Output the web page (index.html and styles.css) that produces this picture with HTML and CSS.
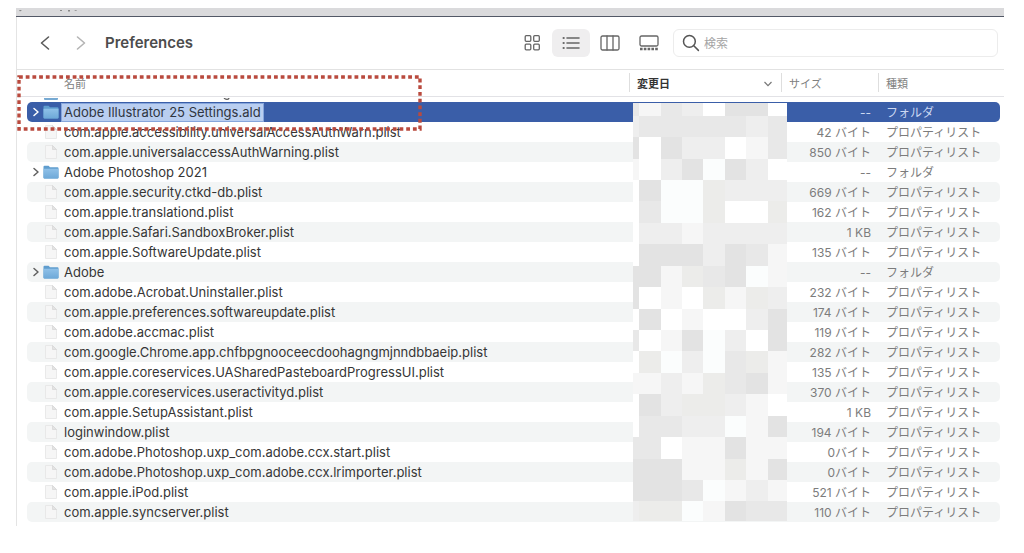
FILE: index.html
```html
<!DOCTYPE html>
<html lang="ja">
<head>
<meta charset="utf-8">
<title>Preferences</title>
<link rel="stylesheet" href="styles.css">
</head>
<body>
<svg class="defs" aria-hidden="true">
  <defs>
    <linearGradient id="folder-face" x1="0" y1="0" x2="0" y2="1"><stop offset="0" stop-color="#8fc1e8"/><stop offset="1" stop-color="#6ea9d8"/></linearGradient>
    <symbol id="folder" viewBox="0 0 16 14"><path d="M.5 1.8Q.5 .8 1.5 .8H5.6L7 2.2H14.5Q15.5 2.2 15.5 3.2V12.4Q15.5 13.4 14.5 13.4H1.5Q.5 13.4 .5 12.4Z" fill="#5f9dce"/><path d="M.5 3.8H15.5V12.4Q15.5 13.4 14.5 13.4H1.5Q.5 13.4 .5 12.4Z" fill="url(#folder-face)"/></symbol>
    <symbol id="doc" viewBox="0 0 16 16"><path d="M2.5 1.5H9.5L13.5 5.5V14.5H2.5Z" fill="#f6f6f6" stroke="#e4e4e4" stroke-width=".8"/><path d="M9.5 1.5V5.5H13.5Z" fill="#e4e4e4" stroke="#d4d4d4" stroke-width=".7"/></symbol>
    <symbol id="arrow" viewBox="0 0 8 10"><path d="M2 1.5L6 5L2 8.5" fill="none" stroke="currentColor" stroke-width="1.5" stroke-linecap="round" stroke-linejoin="round"/></symbol>
  </defs>
</svg>
<main class="window">
  <div class="backdrop"><svg width="70" height="3" viewBox="0 0 70 3" aria-hidden="true"><path d="M3 0H6L4 1.5Z M44 0H46V1H44Z M52 0H54V1.5H52Z M58 0L61 0L60 1Z" fill="#888"/></svg></div>
  <header class="toolbar">
    <nav class="history">
      <button class="nav" aria-label="戻る"><svg width="10" height="16" viewBox="0 0 10 16"><path d="M8.5 2L1.5 8L8.5 14"/></svg></button>
      <button class="nav nav-off" aria-label="進む"><svg width="10" height="16" viewBox="0 0 10 16"><path d="M1.5 2L8.5 8L1.5 14"/></svg></button>
    </nav>
    <h1 class="title">Preferences</h1>
    <div class="views">
      <button class="view" aria-label="アイコン"><svg width="18" height="18" viewBox="0 0 18 18"><rect x="2.2" y="1.7" width="5.6" height="5.6" rx="1"/><rect x="10.7" y="1.7" width="5.6" height="5.6" rx="1"/><rect x="2.2" y="10.2" width="5.6" height="5.6" rx="1"/><rect x="10.7" y="10.2" width="5.6" height="5.6" rx="1"/></svg></button>
      <button class="view view-on" aria-label="リスト"><svg width="18" height="16" viewBox="0 0 18 16"><path d="M5 3H17M5 8H17M5 13H17" stroke-width="1.6"/><path d="M1.6 3H1.7M1.6 8H1.7M1.6 13H1.7" stroke-width="2.2"/></svg></button>
      <button class="view" aria-label="カラム"><svg width="20" height="16" viewBox="0 0 20 16"><rect x="1" y="1" width="18" height="14" rx="1.5"/><path d="M7 1V15M13 1V15"/></svg></button>
      <button class="view" aria-label="ギャラリー"><svg width="20" height="16" viewBox="0 0 20 16"><rect x="1" y="1" width="18" height="10" rx="1.5"/><path class="thumbs" d="M1 14H19" stroke-width="2.4" stroke-dasharray="2.6 1.2"/></svg></button>
    </div>
    <label class="search"><svg width="18" height="18" viewBox="0 0 18 18" aria-hidden="true"><circle cx="7.4" cy="7.4" r="5.9"/><path d="M11.8 11.8L16.4 16.4"/></svg><input type="search" placeholder="検索" aria-label="検索"></label>
  </header>
  <section class="list">
    <table class="files">
      <colgroup><col><col class="col-date"><col class="col-size"><col class="col-kind"></colgroup>
      <thead><tr><th class="name-head">名前</th><th class="sorted"><div class="sort">変更日<svg width="10" height="6" viewBox="0 0 10 6" aria-hidden="true"><path d="M1.5 1L5 4.6L8.5 1" fill="none" stroke="#777" stroke-width="1.2"/></svg></div></th><th>サイズ</th><th>種類</th></tr></thead>
      <tbody>
        <tr class="peek"><td colspan="4"><svg width="220" height="4" viewBox="0 0 220 4" aria-hidden="true"><path d="M17 0H31V1Q31 2 30 2H18Q17 2 17 1Z" fill="#76a9d2"/><path d="M197 0Q198 1.4 200 1.4Q202 1.4 202 0" fill="none" stroke="#555" stroke-width="1.2"/></svg></td></tr>
        <tr class="selected"><td><div class="name"><svg class="arrow"><use href="#arrow"/></svg><svg class="icon"><use href="#folder"/></svg><input class="rename" type="text" value="Adobe Illustrator 25 Settings.ald" aria-label="名前"></div></td><td></td><td class="size">--</td><td class="kind">フォルダ</td></tr>
        <tr><td><div class="name"><svg class="icon"><use href="#doc"/></svg>com.apple.accessibility.universalAccessAuthWarn.plist</div></td><td></td><td class="size">42 バイト</td><td class="kind">プロパティリスト</td></tr>
        <tr><td><div class="name"><svg class="icon"><use href="#doc"/></svg>com.apple.universalaccessAuthWarning.plist</div></td><td></td><td class="size">850 バイト</td><td class="kind">プロパティリスト</td></tr>
        <tr><td><div class="name"><svg class="arrow"><use href="#arrow"/></svg><svg class="icon"><use href="#folder"/></svg>Adobe Photoshop 2021</div></td><td></td><td class="size">--</td><td class="kind">フォルダ</td></tr>
        <tr><td><div class="name"><svg class="icon"><use href="#doc"/></svg>com.apple.security.ctkd-db.plist</div></td><td></td><td class="size">669 バイト</td><td class="kind">プロパティリスト</td></tr>
        <tr><td><div class="name"><svg class="icon"><use href="#doc"/></svg>com.apple.translationd.plist</div></td><td></td><td class="size">162 バイト</td><td class="kind">プロパティリスト</td></tr>
        <tr><td><div class="name"><svg class="icon"><use href="#doc"/></svg>com.apple.Safari.SandboxBroker.plist</div></td><td></td><td class="size">1 KB</td><td class="kind">プロパティリスト</td></tr>
        <tr><td><div class="name"><svg class="icon"><use href="#doc"/></svg>com.apple.SoftwareUpdate.plist</div></td><td></td><td class="size">135 バイト</td><td class="kind">プロパティリスト</td></tr>
        <tr><td><div class="name"><svg class="arrow"><use href="#arrow"/></svg><svg class="icon"><use href="#folder"/></svg>Adobe</div></td><td></td><td class="size">--</td><td class="kind">フォルダ</td></tr>
        <tr><td><div class="name"><svg class="icon"><use href="#doc"/></svg>com.adobe.Acrobat.Uninstaller.plist</div></td><td></td><td class="size">232 バイト</td><td class="kind">プロパティリスト</td></tr>
        <tr><td><div class="name"><svg class="icon"><use href="#doc"/></svg>com.apple.preferences.softwareupdate.plist</div></td><td></td><td class="size">174 バイト</td><td class="kind">プロパティリスト</td></tr>
        <tr><td><div class="name"><svg class="icon"><use href="#doc"/></svg>com.adobe.accmac.plist</div></td><td></td><td class="size">119 バイト</td><td class="kind">プロパティリスト</td></tr>
        <tr><td><div class="name"><svg class="icon"><use href="#doc"/></svg>com.google.Chrome.app.chfbpgnooceecdoohagngmjnndbbaeip.plist</div></td><td></td><td class="size">282 バイト</td><td class="kind">プロパティリスト</td></tr>
        <tr><td><div class="name"><svg class="icon"><use href="#doc"/></svg>com.apple.coreservices.UASharedPasteboardProgressUI.plist</div></td><td></td><td class="size">135 バイト</td><td class="kind">プロパティリスト</td></tr>
        <tr><td><div class="name"><svg class="icon"><use href="#doc"/></svg>com.apple.coreservices.useractivityd.plist</div></td><td></td><td class="size">370 バイト</td><td class="kind">プロパティリスト</td></tr>
        <tr><td><div class="name"><svg class="icon"><use href="#doc"/></svg>com.apple.SetupAssistant.plist</div></td><td></td><td class="size">1 KB</td><td class="kind">プロパティリスト</td></tr>
        <tr><td><div class="name"><svg class="icon"><use href="#doc"/></svg>loginwindow.plist</div></td><td></td><td class="size">194 バイト</td><td class="kind">プロパティリスト</td></tr>
        <tr><td><div class="name"><svg class="icon"><use href="#doc"/></svg>com.adobe.Photoshop.uxp_com.adobe.ccx.start.plist</div></td><td></td><td class="size">0バイト</td><td class="kind">プロパティリスト</td></tr>
        <tr><td><div class="name"><svg class="icon"><use href="#doc"/></svg>com.adobe.Photoshop.uxp_com.adobe.ccx.lrimporter.plist</div></td><td></td><td class="size">0バイト</td><td class="kind">プロパティリスト</td></tr>
        <tr><td><div class="name"><svg class="icon"><use href="#doc"/></svg>com.apple.iPod.plist</div></td><td></td><td class="size">521 バイト</td><td class="kind">プロパティリスト</td></tr>
        <tr><td><div class="name"><svg class="icon"><use href="#doc"/></svg>com.apple.syncserver.plist</div></td><td></td><td class="size">110 バイト</td><td class="kind">プロパティリスト</td></tr>
      </tbody>
    </table>
    <svg class="mosaic" width="154" height="418" viewBox="0 0 154 418" shape-rendering="crispEdges" aria-hidden="true"></svg>
    <svg class="marker" width="405" height="56" viewBox="0 0 405 56" aria-hidden="true"><rect x="2" y="2" width="401" height="52" fill="none" stroke="#b94a3e" stroke-width="3.4" stroke-dasharray="3.8 2.91"/></svg>
  </section>
</main>
<script src="script.js"></script>
</body>
</html>
```
FILE: styles.css
```css
* { box-sizing: border-box; }
body {
  margin: 0;
  padding: 8px 20px 24px 16px;
  background: #fff;
  color: #363636;
  font: 13px/20px Inter, "Noto Sans CJK JP", sans-serif;
}
button, input { font: inherit; color: inherit; }
button { border: 0; background: none; padding: 0; }
.defs { position: absolute; width: 0; height: 0; }
.backdrop {
  height: 9px;
  background: #dadadc;
  border-bottom: 1px solid #525866;
  line-height: 0;
}
.toolbar {
  display: flex;
  align-items: center;
  height: 53px;
  padding: 0 6px 0 16px;
  border-left: 1px solid #e4e4e4;
  border-bottom: 1px solid #e2e2e2;
}
.history { display: flex; gap: 12px; }
.nav, .view { display: flex; align-items: center; justify-content: center; }
.nav { width: 24px; height: 28px; color: #5a5a5a; }
.nav-off { color: #b4b4b4; }
.nav svg { fill: none; stroke: currentColor; stroke-width: 1.6; stroke-linecap: round; stroke-linejoin: round; }
.title { flex: 1; margin: 0 0 0 12px; font-size: 15px; font-weight: 600; color: #4c4c4c; }
.views { display: flex; gap: 1px; margin-right: 5px; }
.view { width: 38px; height: 28px; border-radius: 6px; }
.view-on { background: #efeeef; }
.view svg { fill: none; stroke: #666; stroke-width: 1.3; stroke-linecap: round; }
.view .thumbs { stroke-linecap: butt; }
.search {
  display: flex;
  align-items: center;
  gap: 4px;
  width: 325px;
  height: 28px;
  padding: 0 8px;
  border: 1px solid #ececec;
  border-radius: 6px;
}
.search svg { flex: none; fill: none; stroke: #555; stroke-width: 1.5; stroke-linecap: round; }
.search input { flex: 1; min-width: 0; padding: 2px 0 0; border: 0; outline: 0; background: none; font-size: 12px; }
.search input::placeholder { color: #a4a4a4; }
.list {
  position: relative;
  padding: 0 4px 4px 10px;
  border-left: 1px solid #e4e4e4;
  background: linear-gradient(#e2e2e6, #e2e2e6) 0 26px / 100% 1px no-repeat;
}
.files { width: 100%; table-layout: fixed; border-spacing: 0; }
.col-date { width: 152px; }
.col-size { width: 97px; }
.col-kind { width: 122px; }
th {
  height: 27px;
  padding: 0 8px;
  line-height: 18px;
  text-align: left;
  font-size: 11px;
  font-weight: 400;
  color: #808080;
  background: linear-gradient(#dedede, #dedede) 0 3px / 1px 19px no-repeat;
}
.name-head { padding-left: 37px; background: none; }
.sorted { font-weight: 700; color: #333; }
.sort { display: flex; align-items: center; justify-content: space-between; }
td { height: 20px; padding: 0; }
.peek td { height: 5px; line-height: 0; vertical-align: top; }
tbody tr:nth-child(2n) td { background: #f3f5f5; }
td:first-child { border-radius: 5px 0 0 5px; }
td:last-child { border-radius: 0 5px 5px 0; }
.files .selected td { background: #3a5ea8; color: #ccd8f2; }
.name { display: flex; align-items: center; justify-content: flex-end; gap: 5px; width: max-content; min-width: 37px; padding-left: 16px; height: 20px; white-space: nowrap; }
.name:has(.arrow) { padding-left: 5px; gap: 3px; }
.arrow { width: 8px; height: 10px; color: #606060; }
.selected .arrow { color: #fff; }
.icon { width: 16px; height: 16px; }
.arrow + .icon { margin-right: 2px; }
.rename {
  width: 203px;
  height: 19px;
  margin-left: -3px;
  padding: 0 2px;
  border: 1px solid #86a6dc;
  outline: 0;
  background: #b9cef0;
  color: #2f3540;
}
.size, .kind { padding-top: 2px; line-height: 18px; font-size: 12px; color: #7c7c7c; white-space: nowrap; }
.size { padding-right: 7px; text-align: right; }
.kind { padding-left: 8px; }
.mosaic { position: absolute; top: 33px; right: 217px; }
.marker { position: absolute; top: 5px; left: 0; }
```
FILE: script.js
```js
// Pixelated cover over the modification dates.
const tones = { w: "#ffffff", g: "#fbfdfd", a: "#f6f6f6", b: "#eeeeee", c: "#e8e8e8", d: "#e3e3e3", y: "#ececea" };
const columns = [0, 6, 28, 49, 70, 92, 113, 135, 154];
const lines = [0, 13, 34, 56, 77, 98, 120, 141, 163, 184, 206, 227, 248, 270, 291, 313, 334, 356, 377, 398, 418];
const cells = [
  "cacbwddw", "bcccccbc", "dwdbbwac", "awbdgdbw", "wdggybbb",
  "wcggywwy", "wbbabbbb", "wdddbdca", "ddaycdga", "dwawyayb",
  "wdwawwbd", "cwadgbwd", "wygbgcya", "aabaycda", "wdbyybaw",
  "wccbbgad", "ccwaadaa", "dddaayad", "dddcgaba", "byygadcc"
];
const mosaic = document.querySelector(".mosaic");
cells.forEach((line, r) => [...line].forEach((tone, c) => {
  const cell = document.createElementNS("http://www.w3.org/2000/svg", "rect");
  cell.setAttribute("x", columns[c]);
  cell.setAttribute("y", lines[r]);
  cell.setAttribute("width", columns[c + 1] - columns[c]);
  cell.setAttribute("height", lines[r + 1] - lines[r]);
  cell.setAttribute("fill", tones[tone]);
  mosaic.append(cell);
}));
```
